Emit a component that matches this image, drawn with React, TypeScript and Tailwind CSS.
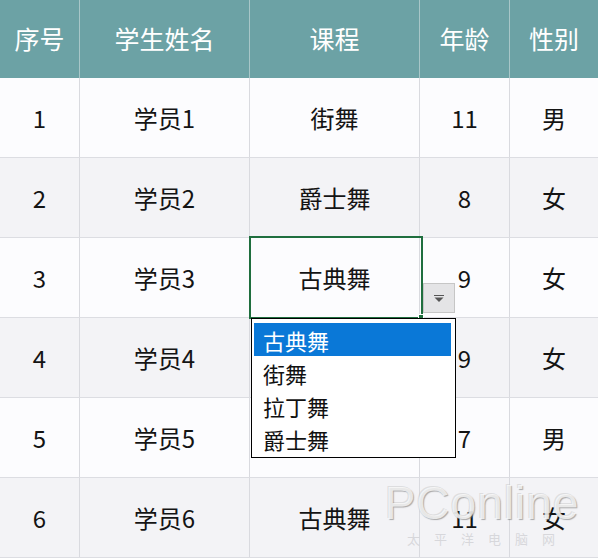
const FONT = "font-['Noto_Sans_CJK_SC','Noto_Sans',sans-serif]";

const HEADERS = ["序号", "学生姓名", "课程", "年龄", "性别"];

const ROWS = [
  ["1", "学员1", "街舞", "11", "男"],
  ["2", "学员2", "爵士舞", "8", "女"],
  ["3", "学员3", "古典舞", "9", "女"],
  ["4", "学员4", "", "9", "女"],
  ["5", "学员5", "", "7", "男"],
  ["6", "学员6", "古典舞", "11", "女"],
];

const OPTIONS = ["古典舞", "街舞", "拉丁舞", "爵士舞"];

const COLS = "grid grid-cols-[80px_170px_170px_90px_88px]";

export default function App() {
  return (
    <div className={`relative h-[558px] w-[598px] overflow-hidden bg-white ${FONT}`}>
      <div className={`${COLS} h-[78px] bg-[#6ca2a5] text-[25px] text-white`}>
        {HEADERS.map((h, i) => (
          <div
            key={h}
            className={`flex items-center justify-center ${i < 4 ? "border-r border-[#a8c6c8]" : ""}`}
          >
            {h}
          </div>
        ))}
      </div>

      {ROWS.map((row, r) => (
        <div
          key={r}
          className={`${COLS} h-[80px] border-b border-[#dcdde2] text-[24px] text-[#141414] ${r % 2 ? "bg-[#f3f3f6]" : "bg-[#fcfcfe]"}`}
        >
          {row.map((cell, c) => (
            <div
              key={c}
              className={`flex items-center justify-center ${c < 4 ? "border-r border-[#d9dadf]" : ""}`}
            >
              {cell}
            </div>
          ))}
        </div>
      ))}

      {/* active cell */}
      <div className="absolute left-[249px] top-[236px] h-[83px] w-[174px] border-2 border-[#1f6e3e]" />
      <div className="absolute left-[418px] top-[314px] size-[6px] border border-white bg-[#1f6e3e]" />

      {/* dropdown button */}
      <div className="absolute left-[423px] top-[283px] flex h-[30px] w-[32px] items-center justify-center border border-[#c6c6c6] bg-[#e4e4e6]">
        <svg width="12" height="9" viewBox="0 0 12 9">
          <rect x="1" y="1" width="10" height="1" fill="#555" />
          <path d="M1.5 3.5h9L6 8z" fill="#555" />
        </svg>
      </div>

      {/* dropdown list */}
      <div className="absolute left-[251px] top-[318px] flex h-[140px] w-[205px] flex-col border-[1.5px] border-black bg-white px-[2px] pt-[4px] text-[22px] leading-none text-[#111]">
        {OPTIONS.map((o, i) => (
          <div
            key={o}
            className={`flex h-[33px] items-center pl-[9px] ${i === 0 ? "mr-[2px] bg-[#0a78d7] text-white" : ""}`}
          >
            {o}
          </div>
        ))}
      </div>

      {/* watermark */}
      <div className="pointer-events-none absolute left-[384px] top-[480px] flex w-[196px] flex-col items-center">
        <div className="font-['Liberation_Sans',sans-serif] text-[46px] font-light leading-none tracking-[1px] text-white/75 [text-shadow:1px_1px_1px_rgba(120,120,120,0.6),-1px_-1px_0_rgba(200,200,200,0.5)]">
          PConline
        </div>
        <div className="mt-[6px] pl-[12px] text-[13px] leading-none tracking-[14px] text-[#d0d0d4]/80">
          太平洋电脑网
        </div>
      </div>
    </div>
  );
}
